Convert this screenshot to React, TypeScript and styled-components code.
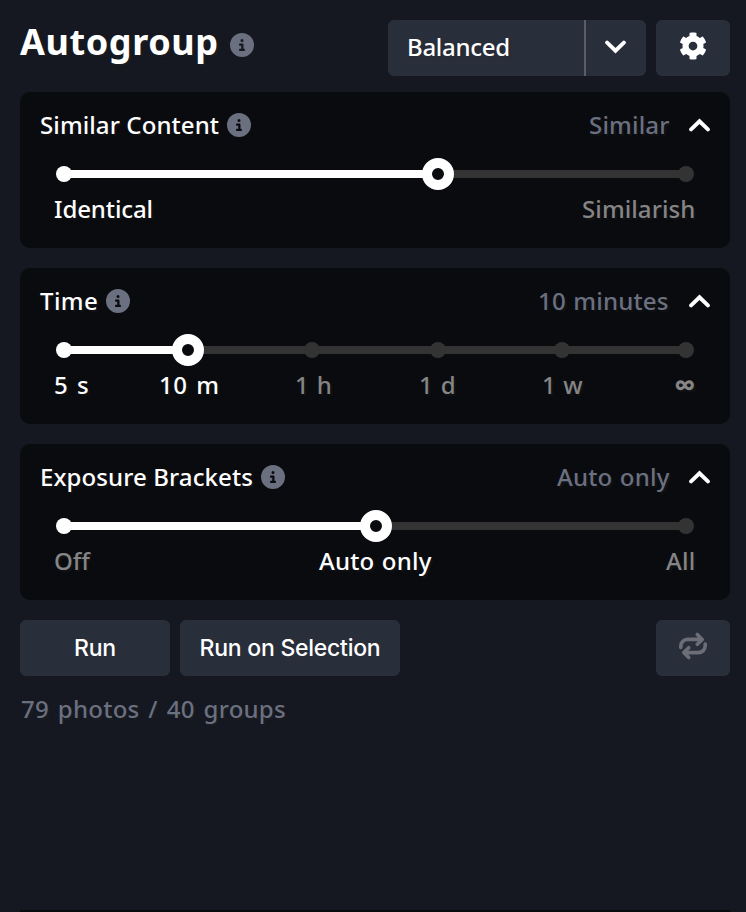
import React from "react";
import styled, { createGlobalStyle } from "styled-components";
import { FaCircleInfo } from "react-icons/fa6";
import { FaCog } from "react-icons/fa";

const GlobalStyle = createGlobalStyle`
  * { box-sizing: border-box; }
  body { margin: 0; background: #151820; }
`;

const Panel = styled.main`
  height: 912px;
  overflow: hidden;
  padding: 20px 16px 0 20px;
  display: flex;
  flex-direction: column;
  background: #151820;
  color: #fff;
  font-family: "Noto Sans", "Open Sans", sans-serif;
  font-size: 24px;
  font-weight: 500;
  text-shadow: 2px 2px 2px rgba(40, 40, 40, 0.3);
`;

const Header = styled.header`
  display: flex;
  height: 56px;
  margin-bottom: 16px;
  gap: 10px;
`;

const Title = styled.h1`
  margin: 0;
  flex: 1;
  display: flex;
  font-size: 36px;
  line-height: 43px;
  font-weight: 700;
`;

const Fit = styled.span<{ $w: number; $spacing?: number; $word?: number }>`
  display: block;
  width: ${(p) => p.$w}px;
  white-space: nowrap;
  letter-spacing: ${(p) => p.$spacing ?? 0}px;
  word-spacing: ${(p) => p.$word ?? 0}px;
`;

const Info = styled(FaCircleInfo)<{ $top: number; $left: number }>`
  width: 24px;
  height: 24px;
  margin: ${(p) => p.$top}px 0 0 ${(p) => p.$left}px;
  color: #6b7080;
  flex: none;
`;

const Select = styled.div`
  display: flex;
  width: 258px;
  border-radius: 6px;
  background: #292e3b;
  overflow: hidden;
`;

const SelectValue = styled.div`
  width: 198px;
  padding-left: 19px;
  line-height: 54px;
  border-right: 2px solid #595d67;
`;

const SelectArrow = styled.div`
  flex: 1;
  display: flex;
  justify-content: center;
  padding: 20px 1px 0 0;
`;

const Button = styled.button<{ $w: number; $lift?: number }>`
  width: ${(p) => p.$w}px;
  height: 56px;
  padding: 0 0 ${(p) => p.$lift ?? 0}px;
  border: 0;
  border-radius: 6px;
  background: #292e3b;
  color: #fff;
  display: flex;
  align-items: center;
  justify-content: center;
  font: 500 23px/28px Inter, sans-serif;
  letter-spacing: -0.25px;
  white-space: nowrap;
`;

const Card = styled.section`
  height: 156px;
  flex: none;
  margin-bottom: 20px;
  padding: 14px 20px 0;
  border-radius: 10px;
  background: #0a0b0f;
`;

const CardHead = styled.div`
  display: flex;
  height: 38px;
  line-height: 38px;
`;

const Value = styled.div`
  flex: 1;
  display: flex;
  justify-content: flex-end;
  color: #6b7080;
`;

const HeadArrow = styled.div`
  margin: 12px 0 0 20px;
  display: flex;
  height: 14px;
`;

const Track = styled.div`
  position: relative;
  height: 8px;
  margin: 26px 24px 0;
  background: #333;
`;

const Filled = styled.div`
  height: 8px;
  background: #fff;
`;

const Stop = styled.i<{ $on: boolean }>`
  position: absolute;
  top: -4px;
  width: 16px;
  height: 16px;
  margin-left: -8px;
  border-radius: 50%;
  background: ${(p) => (p.$on ? "#fff" : "#333")};
`;

const Thumb = styled.i`
  position: absolute;
  top: -12px;
  width: 32px;
  height: 32px;
  margin-left: -16px;
  border: 10px solid #fff;
  border-radius: 50%;
  background: #0a0b0f;
`;

const Labels = styled.div`
  display: flex;
  height: 38px;
  line-height: 38px;
  margin: 12px 14px 0;
`;

const Label = styled.div<{ $on: boolean; $gap: number; $symbol: boolean }>`
  flex: none;
  color: ${(p) => (p.$on ? "#fff" : "#858585")};
  margin-right: ${(p) => p.$gap}px;
  font-weight: ${(p) => (p.$symbol ? 700 : 500)};
  font-size: ${(p) => (p.$symbol ? 30 : 24)}px;
`;

const Actions = styled.div`
  display: flex;
  gap: 10px;
`;

const Spacer = styled.div`
  flex: 1;
`;

const Stats = styled.p`
  margin: 14px 0 0 1px;
  line-height: 38px;
  color: #6b7080;
  letter-spacing: 0.25px;
  word-spacing: 2.4px;
`;

const NextPanel = styled.div`
  margin-top: auto;
  height: 2px;
  flex: none;
  background: #0a0b0f;
`;

const Chevron = ({ up = false }: { up?: boolean }) => (
  <svg width="21" height="14" viewBox="0 0 21 14" fill="none" stroke="#fff" strokeWidth="3.9" strokeLinecap="round" strokeLinejoin="miter">
    <path d={up ? "M2.1 11.4 10.5 3.3 18.9 11.4" : "M2.1 2.6 10.5 10.7 18.9 2.6"} />
  </svg>
);

const Repeat = () => (
  <svg width="28" height="28" viewBox="0 0 28 28" fill="none" stroke="#6b6d77" strokeWidth="3.6" strokeLinecap="round" strokeLinejoin="round">
    <path d="M1.8 15.4v-1.2a6.8 6.8 0 0 1 6.8-6.8H22.8M18.3 2.5 23.2 7.4 18.3 12.3M26.2 12v1.8a6.8 6.8 0 0 1-6.8 6.8H5.2M9.7 15.7 4.8 20.6l4.9 4.9" />
  </svg>
);

type Item = { text: string; w: number; sp: number; word?: number; gap?: number; on?: boolean; symbol?: boolean };
type Setting = {
  name: Item;
  value: Item;
  stops: number[];
  current: number;
  labels: Item[];
};

const settings: Setting[] = [
  {
    name: { text: "Similar Content", w: 180, sp: 0.1 },
    value: { text: "Similar", w: 80, sp: 0.2 },
    stops: [0, 622],
    current: 374,
    labels: [
      { text: "Identical", w: 99, sp: -0.1, gap: 429, on: true },
      { text: "Similarish", w: 114, sp: 0.1 },
    ],
  },
  {
    name: { text: "Time", w: 59, sp: 0.4 },
    value: { text: "10 minutes", w: 131, sp: 0.2, word: 1 },
    stops: [0, 248, 374, 498, 622],
    current: 124,
    labels: [
      { text: "5 s", w: 36, sp: 0.5, word: 2, gap: 69, on: true },
      { text: "10 m", w: 60, sp: 0.5, word: 2, gap: 76, on: true },
      { text: "1 h", w: 38, sp: 0.4, word: 1, gap: 86 },
      { text: "1 d", w: 38, sp: 0.4, word: 1, gap: 85 },
      { text: "1 w", w: 42, sp: 0.2, word: 1, gap: 90 },
      { text: "∞", w: 21, sp: 0, symbol: true },
    ],
  },
  {
    name: { text: "Exposure Brackets", w: 214, sp: 0.1 },
    value: { text: "Auto only", w: 112, sp: 0.2, word: 1 },
    stops: [0, 622],
    current: 312,
    labels: [
      { text: "Off", w: 36, sp: 0, gap: 229 },
      { text: "Auto only", w: 113, sp: 0.2, word: 1, gap: 234, on: true },
      { text: "All", w: 30, sp: 0.3 },
    ],
  },
];

const TextItem = ({ item }: { item: Item }) => (
  <Fit $w={item.w} $spacing={item.sp} $word={item.word}>{item.text}</Fit>
);

export default function App() {
  return (
    <>
      <GlobalStyle />
      <Panel>
        <Header>
          <Title>
            <Fit $w={198} $spacing={0.6}>Autogroup</Fit>
            <Info $top={13} $left={12} />
          </Title>
          <Select>
            <SelectValue><Fit $w={103} $spacing={-0.3}>Balanced</Fit></SelectValue>
            <SelectArrow><Chevron /></SelectArrow>
          </Select>
          <Button $w={74} $lift={5} aria-label="Settings"><FaCog size={28} /></Button>
        </Header>
        {settings.map((s) => (
          <Card key={s.name.text}>
            <CardHead>
              <TextItem item={s.name} />
              <Info $top={7} $left={7} />
              <Value><TextItem item={s.value} /></Value>
              <HeadArrow><Chevron up /></HeadArrow>
            </CardHead>
            <Track>
              <Filled style={{ width: s.current }} />
              {s.stops.map((x) => <Stop key={x} $on={x < s.current} style={{ left: x }} />)}
              <Thumb style={{ left: s.current }} />
            </Track>
            <Labels>
              {s.labels.map((l) => (
                <Label key={l.text} $on={!!l.on} $gap={l.gap ?? 0} $symbol={!!l.symbol}><TextItem item={l} /></Label>
              ))}
            </Labels>
          </Card>
        ))}
        <Actions>
          <Button $w={150}>Run</Button>
          <Button $w={220}>Run on Selection</Button>
          <Spacer />
          <Button $w={74} $lift={5} aria-label="Repeat"><Repeat /></Button>
        </Actions>
        <Stats>79 photos / 40 groups</Stats>
        <NextPanel />
      </Panel>
    </>
  );
}
